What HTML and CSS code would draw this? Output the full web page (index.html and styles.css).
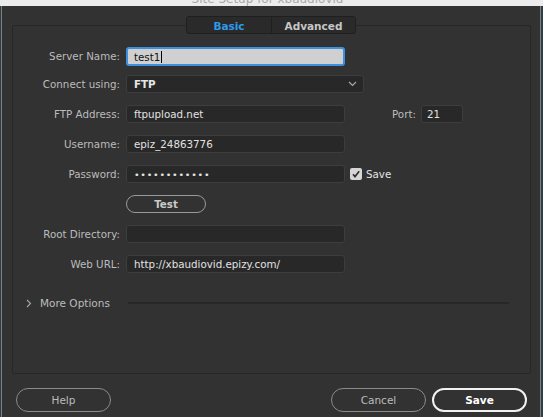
FILE: index.html
```html
<!DOCTYPE html>
<html>
<head>
<meta charset="utf-8">
<link rel="stylesheet" href="styles.css">
</head>
<body>
<div class="titlebar"><span class="title">Site Setup for xbaudiovid</span></div>
<div class="window">
  <div class="tabs">
    <div class="tab active">Basic</div>
    <div class="tab">Advanced</div>
  </div>
  <div class="panel">
    <div class="form">
      <div class="row row-first">
        <label class="lbl">Server Name:</label>
        <div class="field focus">test1<span class="caret"></span></div>
      </div>
      <div class="row">
        <label class="lbl">Connect using:</label>
        <div class="field select"><span class="sel-text">FTP</span>
          <svg class="chev" width="9" height="6" viewBox="0 0 9 6"><path d="M1 1 L4.5 4.5 L8 1" fill="none" stroke="#a8a8a8" stroke-width="1.2"/></svg>
        </div>
      </div>
      <div class="row">
        <label class="lbl">FTP Address:</label>
        <div class="field">ftpupload.net</div>
        <label class="lbl port-lbl">Port:</label>
        <div class="field port">21</div>
      </div>
      <div class="row">
        <label class="lbl">Username:</label>
        <div class="field">epiz_24863776</div>
      </div>
      <div class="row">
        <label class="lbl">Password:</label>
        <div class="field dots">••••••••••••</div>
        <span class="check"><svg width="12" height="12" viewBox="0 0 12 12"><path d="M3 6.2 L5 8.6 L9.2 3.2" fill="none" stroke="#2e2e2e" stroke-width="1.6"/></svg></span>
        <span class="check-lbl">Save</span>
      </div>
      <div class="row">
        <span class="lbl"></span>
        <div class="btn test">Test</div>
      </div>
      <div class="row">
        <label class="lbl">Root Directory:</label>
        <div class="field"></div>
      </div>
      <div class="row">
        <label class="lbl">Web URL:</label>
        <div class="field">http://xbaudiovid.epizy.com/</div>
      </div>
    </div>
    <div class="more">
      <svg class="more-chev" width="6" height="9" viewBox="0 0 6 9"><path d="M1 1 L4.5 4.5 L1 8" fill="none" stroke="#a8a8a8" stroke-width="1.1"/></svg>
      <span class="more-text">More Options</span>
      <span class="divider"></span>
    </div>
  </div>
  <div class="footer">
    <div class="btn pill">Help</div>
    <div class="spacer"></div>
    <div class="btn pill">Cancel</div>
    <div class="btn pill primary">Save</div>
  </div>
</div>
</body>
</html>
```
FILE: styles.css
```css
* { box-sizing: border-box; }
html, body { margin: 0; padding: 0; }
body {
  width: 543px;
  height: 417px;
  overflow: hidden;
  background: #2f3d47;
  font-family: "DejaVu Sans", "Noto Sans", sans-serif;
  font-size: 10.3px;
  color: #bdbdbd;
}
.titlebar {
  height: 6px;
  background: #ececec;
  overflow: hidden;
  text-align: center;
}
.title {
  display: block;
  margin-top: -9px;
  line-height: 16px;
  font-size: 12px;
  color: #a9a9a9;
  padding-right: 8px;
}
.window {
  margin-left: 1px;
  width: 540px;
  height: 411px;
  background: #323232;
  border-left: 1px solid #7e7e7e;
  border-right: 1px solid #7e7e7e;
  display: flex;
  flex-direction: column;
}
.tabs {
  position: relative;
  z-index: 1;
  align-self: flex-start;
  margin-left: 184px;
  margin-top: 10px;
  display: flex;
  height: 18px;
  border: 1px solid #1f1f1f;
  border-radius: 3px;
  background: #2a2a2a;
}
.tab {
  width: 84px;
  display: flex;
  align-items: center;
  justify-content: center;
  font-weight: bold;
  font-size: 10.5px;
  color: #c6c6c6;
  padding-top: 1px;
}
.tab + .tab { border-left: 1px solid #1f1f1f; }
.tab.active { color: #2e9bea; }
.panel {
  margin-left: 10px;
  margin-top: -9px;
  width: 519px;
  height: 349px;
  border: 1px solid #272727;
  border-radius: 2px;
}
.form {
  padding-top: 21px;
  display: flex;
  flex-direction: column;
  gap: 12px;
}
.row {
  display: flex;
  align-items: center;
  height: 18px;
}
.row-first { margin-bottom: -2px; }
.lbl {
  width: 107px;
  flex: none;
  text-align: right;
  color: #bcbcbc;
  margin-right: 6px;
}
.field {
  width: 219px;
  height: 18px;
  flex: none;
  background: #282828;
  border: 1px solid #3d3d3d;
  border-radius: 3px;
  color: #e2e2e2;
  padding-left: 7px;
  display: flex;
  align-items: center;
  white-space: nowrap;
}
.field.focus {
  background: #d0d0d0;
  border: 2px solid #3d8fe1;
  color: #111;
  padding-left: 6px;
  margin-top: 1px;
  height: 19px;
}
.caret {
  display: inline-block;
  width: 1px;
  height: 12px;
  background: #000;
  margin-left: 1px;
}
.field.select {
  width: 238px;
  justify-content: space-between;
  padding-right: 6px;
}
.sel-text { font-weight: bold; color: #e6e6e6; }
.chev { display: block; }
.port-lbl { width: auto; margin-left: 47px; margin-right: 5px; }
.field.port { width: 42px; padding-left: 5px; }
.field.dots { font-size: 9.5px; letter-spacing: 0.75px; }
.check {
  width: 12px;
  height: 12px;
  margin-left: 5px;
  background: #d6d6d6;
  border-radius: 2px;
  display: flex;
}
.check-lbl { margin-left: 4px; color: #e4e4e4; }
.btn {
  display: flex;
  align-items: center;
  justify-content: center;
  border-radius: 12px;
}
.btn.test {
  width: 80px;
  height: 18px;
  border: 1px solid #9a9a9a;
  font-weight: bold;
  color: #cacaca;
}
.more {
  margin-top: 22px;
  height: 16px;
  display: flex;
  align-items: center;
  padding-left: 13px;
}
.more-chev { display: block; }
.more-text { margin-left: 8px; color: #bcbcbc; font-size: 10.5px; }
.divider {
  margin-left: 18px;
  width: 381px;
  height: 2px;
  background: #272727;
}
.footer {
  margin-top: 14px;
  display: flex;
  padding-left: 14px;
  padding-right: 13px;
  gap: 6px;
}
.spacer { flex: 1; }
.btn.pill {
  width: 95px;
  height: 24px;
  border: 1px solid #8b8b8b;
  color: #bcbcbc;
  font-size: 10.5px;
}
.btn.pill.primary {
  border: 2px solid #f2f2f2;
  color: #ffffff;
  font-weight: bold;
}
```
